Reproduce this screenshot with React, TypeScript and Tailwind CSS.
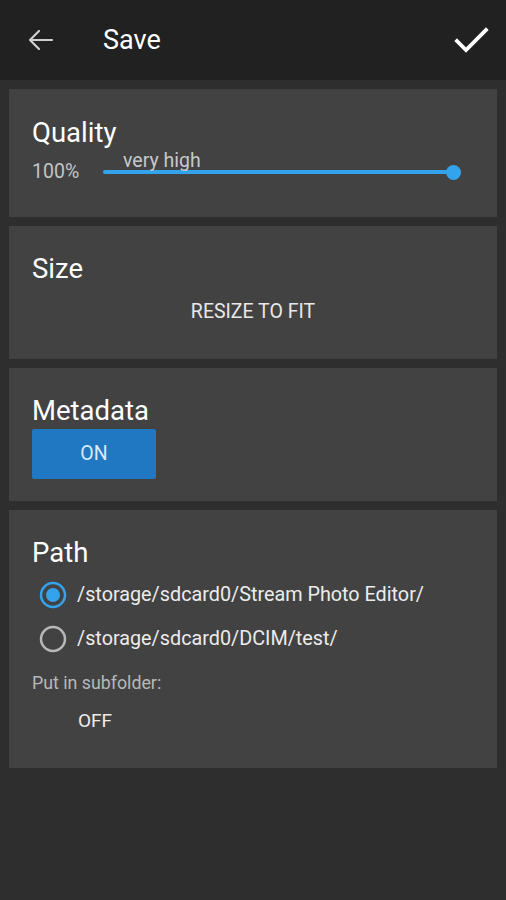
import React from "react";

function Radio({ checked }: { checked: boolean }) {
  return (
    <svg width="30" height="30" viewBox="0 0 30 30" className="shrink-0">
      <circle cx="15" cy="15" r="12" fill="none" stroke={checked ? "#33a3ec" : "#b8b8b8"} strokeWidth="2.5" />
      {checked && <circle cx="15" cy="15" r="7" fill="#33a3ec" />}
    </svg>
  );
}

export default function App() {
  return (
    <div className="w-[506px] h-[900px] bg-[#2e2e2e] overflow-hidden text-white" style={{ fontFamily: "Roboto, 'Noto Sans', sans-serif" }}>
      {/* Top bar */}
      <div className="h-[80px] bg-[#212121] flex items-center relative">
        <svg width="28" height="24" viewBox="0 0 28 24" className="ml-[26px]">
          <path d="M26 12H4M13 3L4 12L13 21" fill="none" stroke="#d0d0d0" strokeWidth="2.2" strokeLinecap="round" strokeLinejoin="round" />
        </svg>
        <div className="ml-[49px] text-[27px] leading-none text-white">Save</div>
        <svg width="38" height="32" viewBox="0 0 38 32" className="ml-auto mr-[15px] mt-[2px]">
          <path d="M4 16L13 25L33 5" fill="none" stroke="#ffffff" strokeWidth="3.8" strokeLinecap="square" />
        </svg>
      </div>

      <div className="flex flex-col px-[9px] pt-[9px] gap-[9px]">
        {/* Quality */}
        <div className="h-[128px] bg-[#424242] pl-[23px] pt-[29px] flex flex-col">
          <div className="text-[27.5px] leading-[30px]">Quality</div>
          <div className="flex items-center h-[24px] mt-[12px]">
            <div className="text-[19.5px] text-[#c4c4c4] w-[71px]">100%</div>
            <div className="relative w-[351px] h-[24px] flex items-center">
              <div className="h-[4px] w-full bg-[#33a3ec] rounded-full" />
              <div className="absolute right-[-7px] top-[5px] w-[15px] h-[15px] rounded-full bg-[#33a3ec]" />
              <div className="absolute left-[20px] top-[-9px] text-[19.5px] text-[#c8c8c8] leading-[20px]">very high</div>
            </div>
          </div>
        </div>

        {/* Size */}
        <div className="h-[133px] bg-[#424242] pl-[23px] pt-[28px] flex flex-col">
          <div className="text-[27.5px] leading-[30px]">Size</div>
          <div className="mt-[18px] text-[19.5px] leading-[20px] text-[#e8e8e8] text-center pr-[23px]">RESIZE TO FIT</div>
        </div>

        {/* Metadata */}
        <div className="h-[133px] bg-[#424242] pl-[23px] pt-[28px] flex flex-col">
          <div className="text-[27.5px] leading-[30px]">Metadata</div>
          <div className="mt-[3px] w-[124px] h-[50px] bg-[#1f78c1] rounded-[2px] flex items-center justify-center text-[19.5px] text-[#d8eaf7]">ON</div>
        </div>

        {/* Path */}
        <div className="h-[258px] bg-[#424242] pl-[23px] pt-[28px] flex flex-col">
          <div className="text-[27.5px] leading-[30px]">Path</div>
          <div className="mt-[5px] flex items-center h-[44px] pl-[6px] gap-[9px]">
            <Radio checked />
            <div className="text-[19.8px] text-[#ececec]">/storage/sdcard0/Stream Photo Editor/</div>
          </div>
          <div className="flex items-center h-[44px] pl-[6px] gap-[9px]">
            <Radio checked={false} />
            <div className="text-[19.8px] text-[#ececec]">/storage/sdcard0/DCIM/test/</div>
          </div>
          <div className="mt-[12px] text-[17.8px] leading-[20px] text-[#b8b8b8]">Put in subfolder:</div>
          <div className="mt-[18px] ml-[46px] text-[19px] leading-[20px] text-[#ececec]">OFF</div>
        </div>
      </div>
    </div>
  );
}
